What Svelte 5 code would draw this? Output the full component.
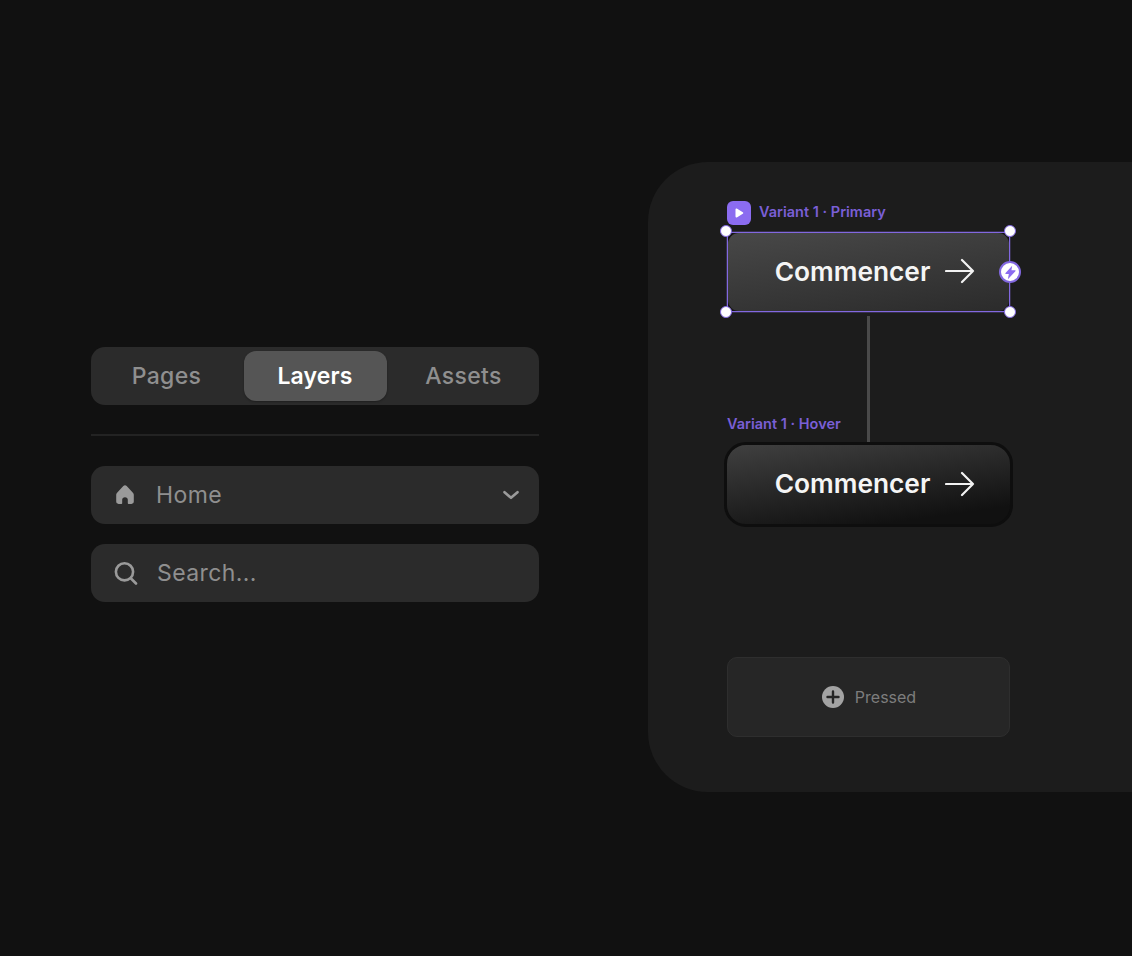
<script>
  const tabs = ['Pages', 'Layers', 'Assets'];
  const active = 'Layers';
  const handles = ['tl', 'tr', 'bl', 'br'];
</script>

<div class="page">
  <section class="side">
    <div class="tabs">
      {#each tabs as tab}
        <div class="tab" class:active={tab === active}>{tab}</div>
      {/each}
    </div>
    <div class="rule"></div>
    <div class="field select">
      <svg class="ico" width="24" height="24" viewBox="0 0 24 24"><path fill="#9a9a9a" d="M12 2.300c.6 0 1.200.3 1.700.8l6.200 6.600c.6.600.9 1.300.9 2.100v6.800c0 1.300-1 2.300-2.300 2.300h-2.700c-.6 0-1-.4-1-1v-3.100c0-1.400-1.100-2.500-2.800-2.500s-2.800 1.100-2.800 2.500v3.100c0 .6-.4 1-1 1H5.500c-1.300 0-2.300-1-2.300-2.300v-6.800c0-.8.300-1.500.9-2.100l6.200-6.600c.5-.5 1.100-.8 1.700-.8z"/></svg>
      <span class="label">Home</span>
      <svg class="chev" width="18" height="18" viewBox="0 0 18 18"><path d="M2.500 6.200 9 11.800l6.500-5.600" fill="none" stroke="#9a9a9a" stroke-width="2.600" stroke-linecap="round" stroke-linejoin="round"/></svg>
    </div>
    <div class="field finder">
      <svg class="ico" width="24" height="24" viewBox="0 0 24 24"><circle cx="10.500" cy="10.800" r="8.600" fill="none" stroke="#9a9a9a" stroke-width="2.600"/><path d="m17 17.500 5 5" stroke="#9a9a9a" stroke-width="2.600" stroke-linecap="round"/></svg>
      <span class="label search">Search...</span>
    </div>
  </section>

  <section class="panel">
    <div class="stack">
      <div class="tag-row">
        <span class="play"><svg width="10" height="10" viewBox="0 0 10 10"><path fill="#fff" d="M1.500 1.400c0-.7.700-1.100 1.300-.8l6 3.600c.6.400.6 1.200 0 1.600l-6 3.600c-.6.300-1.300-.1-1.300-.8z"/></svg></span>
        <span class="tag">Variant 1 · Primary</span>
      </div>
      <div class="selected">
        <div class="cta primary">
          <span>Commencer</span>
          <svg width="30" height="26" viewBox="0 0 30 26"><path d="M1 13h27M17 2l11 11-11 11" fill="none" stroke="#f2f2f2" stroke-width="2.200" stroke-linecap="round" stroke-linejoin="round"/></svg>
        </div>
        {#each handles as h}
          <i class="handle {h}"></i>
        {/each}
        <span class="bolt"><svg width="15" height="15" viewBox="0 0 16 16"><path fill="#8b6cf0" d="M9.800 .8 2.700 8.600c-.4.500-.1 1.100.5 1.100h3L5.200 15.200l8-8.600c.4-.5.100-1.100-.5-1.100H9z"/></svg></span>
      </div>

      <div class="link">
        <span class="tag">Variant 1 · Hover</span>
      </div>

      <div class="cta hover">
        <span>Commencer</span>
        <svg width="30" height="26" viewBox="0 0 30 26"><path d="M1 13h27M17 2l11 11-11 11" fill="none" stroke="#f2f2f2" stroke-width="2.200" stroke-linecap="round" stroke-linejoin="round"/></svg>
      </div>

      <div class="pressed">
        <svg width="22" height="22" viewBox="0 0 22 22"><circle cx="11" cy="11" r="11" fill="#a3a3a3"/><path d="M11 5.500v11M5.500 11h11" stroke="#262626" stroke-width="2.400" stroke-linecap="round"/></svg>
        <span>Pressed</span>
      </div>
    </div>
  </section>
</div>

<style>
  :global(body) {
    margin: 0;
    background: #111111;
  }
  .page {
    width: 1132px;
    height: 956px;
    overflow: hidden;
    display: flex;
    align-items: flex-start;
    background: #111111;
    font-family: Inter, "Liberation Sans", sans-serif;
  }
  .side {
    width: 448px;
    margin: 347px 0 0 91px;
    flex: none;
    display: flex;
    flex-direction: column;
  }
  .tabs {
    height: 58px;
    box-sizing: border-box;
    padding: 4px;
    border-radius: 14px;
    background: #2b2b2b;
    display: grid;
    grid-template-columns: repeat(3, 1fr);
    column-gap: 5.500px;
  }
  .tab {
    display: flex;
    align-items: center;
    justify-content: center;
    font-size: 23px;
    font-weight: 500;
    letter-spacing: 0.35px;
    color: #8f8f8f;
    border-radius: 12px;
    height: 50px;
  }
  .tab.active {
    background: #555555;
    color: #ffffff;
    font-weight: 600;
    letter-spacing: 0.15px;
    box-shadow: 0 1px 2px rgba(0, 0, 0, 0.3);
  }
  .rule {
    height: 2px;
    margin: 29px 0 30px;
    background: #232323;
  }
  .field {
    height: 58px;
    box-sizing: border-box;
    padding: 0 19px 0 22px;
    border-radius: 14px;
    background: #2b2b2b;
    display: flex;
    align-items: center;
    margin-bottom: 20px;
  }
  .field.finder {
    padding-left: 23px;
  }
  .ico {
    flex: none;
    width: 24px;
    margin-right: 19px;
  }
  .label {
    font-size: 23px;
    font-weight: 400;
    color: #8f8f8f;
    letter-spacing: 0.4px;
  }
  .chev {
    margin-left: auto;
  }
  .panel {
    width: 600px;
    height: 630px;
    margin: 162px 0 0 109px;
    flex: none;
    border-radius: 60px;
    background: #1c1c1c;
  }
  .stack {
    width: 283px;
    margin: 39px 0 0 79px;
    display: flex;
    flex-direction: column;
  }
  .tag-row {
    height: 31px;
    display: flex;
    align-items: flex-start;
    gap: 8px;
  }
  .play {
    width: 24px;
    height: 24px;
    border-radius: 6px;
    background: #8b6cf0;
    display: flex;
    align-items: center;
    justify-content: center;
  }
  .tag {
    font-size: 14.500px;
    line-height: 22px;
    font-weight: 600;
    color: #7a5fd6;
  }
  .selected {
    position: relative;
    height: 80px;
    box-sizing: border-box;
    border: 1px solid #8268e0;
    outline: 1px solid rgba(130, 104, 224, 0.25);
    background: #141414;
  }
  .cta {
    display: flex;
    align-items: center;
    justify-content: center;
    gap: 15px;
    color: #f5f5f5;
    font-size: 26.300px;
    font-weight: 600;
    border-radius: 14px;
    padding: 0 0 2px 13px;
    box-sizing: border-box;
  }
  .cta.primary {
    height: 100%;
    background: linear-gradient(172deg, #484848 0%, #2b2b2b 100%);
    border-radius: 11px;
  }
  .cta.hover {
    height: 85px;
    width: 289px;
    margin-left: -3px;
    border: 3px solid #0e0e0e;
    border-radius: 22px;
    background: linear-gradient(172deg, #404040 0%, #111111 85%);
  }
  .handle {
    position: absolute;
    width: 12px;
    height: 12px;
    box-sizing: border-box;
    border-radius: 50%;
    background: #fff;
    border: 1.500px solid #8268e0;
  }
  .tl { left: -8px; top: -8px; }
  .tr { right: -7px; top: -8px; }
  .bl { left: -8px; bottom: -7px; }
  .br { right: -7px; bottom: -7px; }
  .bolt {
    position: absolute;
    right: -12px;
    top: 28px;
    width: 22px;
    height: 22px;
    box-sizing: border-box;
    border-radius: 50%;
    background: #fff;
    border: 2px solid #8268e0;
    display: flex;
    align-items: center;
    justify-content: center;
  }
  .link {
    position: relative;
    height: 130px;
    display: flex;
    align-items: flex-end;
    box-sizing: border-box;
    padding-bottom: 7px;
  }
  .link::after {
    content: '';
    position: absolute;
    left: 140px;
    top: 4px;
    bottom: 0;
    width: 3px;
    background: #4a4a4a;
  }
  .pressed {
    margin-top: 130px;
    height: 80px;
    box-sizing: border-box;
    border: 1px solid #2e2e2e;
    border-radius: 10px;
    background: #262626;
    display: flex;
    align-items: center;
    justify-content: center;
    gap: 11px;
    color: #7d7d7d;
    font-size: 16px;
    font-weight: 400;
    padding-left: 1px;
  }
</style>
